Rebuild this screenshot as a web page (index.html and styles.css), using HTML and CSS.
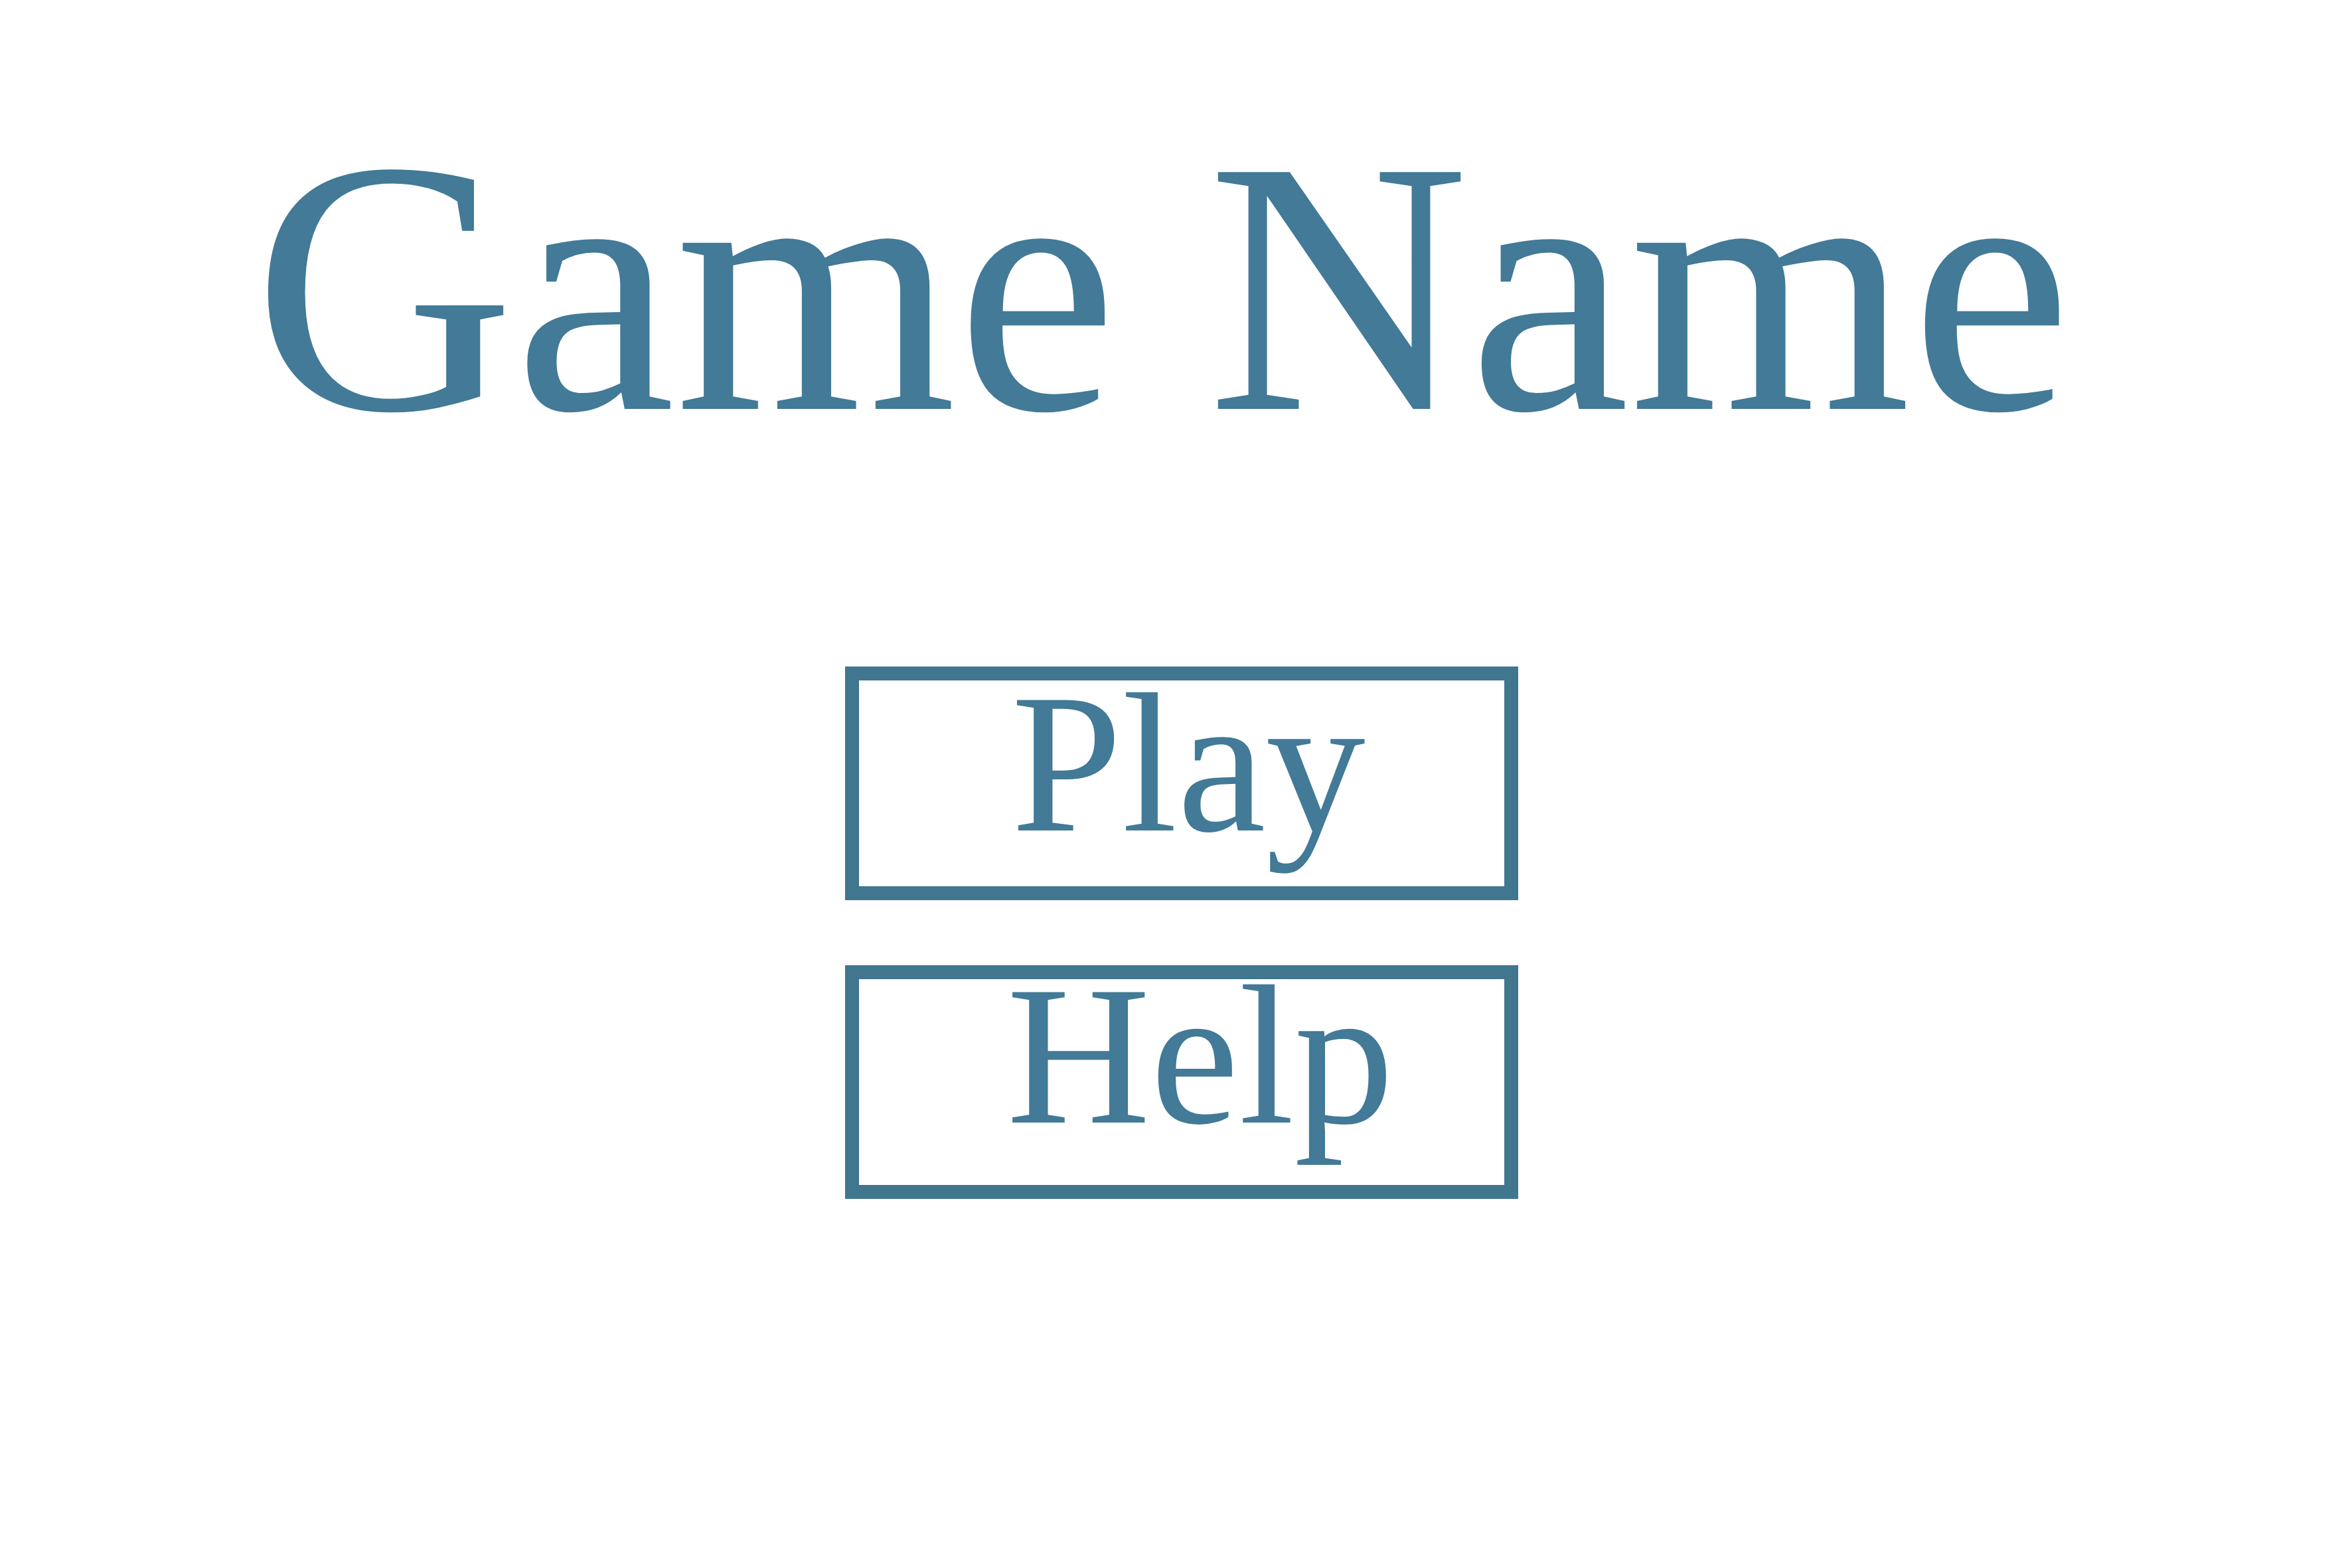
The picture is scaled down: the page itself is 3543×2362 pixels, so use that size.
FILE: index.html
```html
<!DOCTYPE html>
<html lang="en">
<head>
<meta charset="utf-8">
<title>Game Name</title>
<link rel="stylesheet" href="styles.css">
</head>
<body>
<main class="screen">
  <h1 class="title">Game Name</h1>
  <nav class="menu">
    <button class="menu-btn menu-btn-play">Play</button>
    <button class="menu-btn menu-btn-help">Help</button>
  </nav>
</main>
</body>
</html>
```
FILE: styles.css
```css
html, body {
  margin: 0;
  padding: 0;
  background: #ffffff;
}

.screen {
  display: flex;
  flex-direction: column;
  align-items: center;
  font-family: "Liberation Serif", "Times New Roman", serif;
  color: #427a98;
}

.title {
  margin: 119px 0 0 0;
  padding-right: 41px;
  font-size: 545px;
  font-weight: normal;
  line-height: normal;
  white-space: nowrap;
}

.menu {
  display: flex;
  flex-direction: column;
  gap: 98px;
  margin-top: 258px;
  padding-left: 17px;
}

.menu-btn {
  display: block;
  box-sizing: border-box;
  width: 1014px;
  height: 352px;
  margin: 0;
  padding: 0;
  border: 21px solid #41768f;
  background: #ffffff;
  color: #427a98;
  font-family: "Liberation Serif", "Times New Roman", serif;
  font-size: 300px;
  line-height: 100px;
  text-align: center;
  cursor: pointer;
}

.menu-btn-play {
  padding: 0 0 61px 20px;
}

.menu-btn-help {
  padding: 0 0 81px 56px;
}
```
